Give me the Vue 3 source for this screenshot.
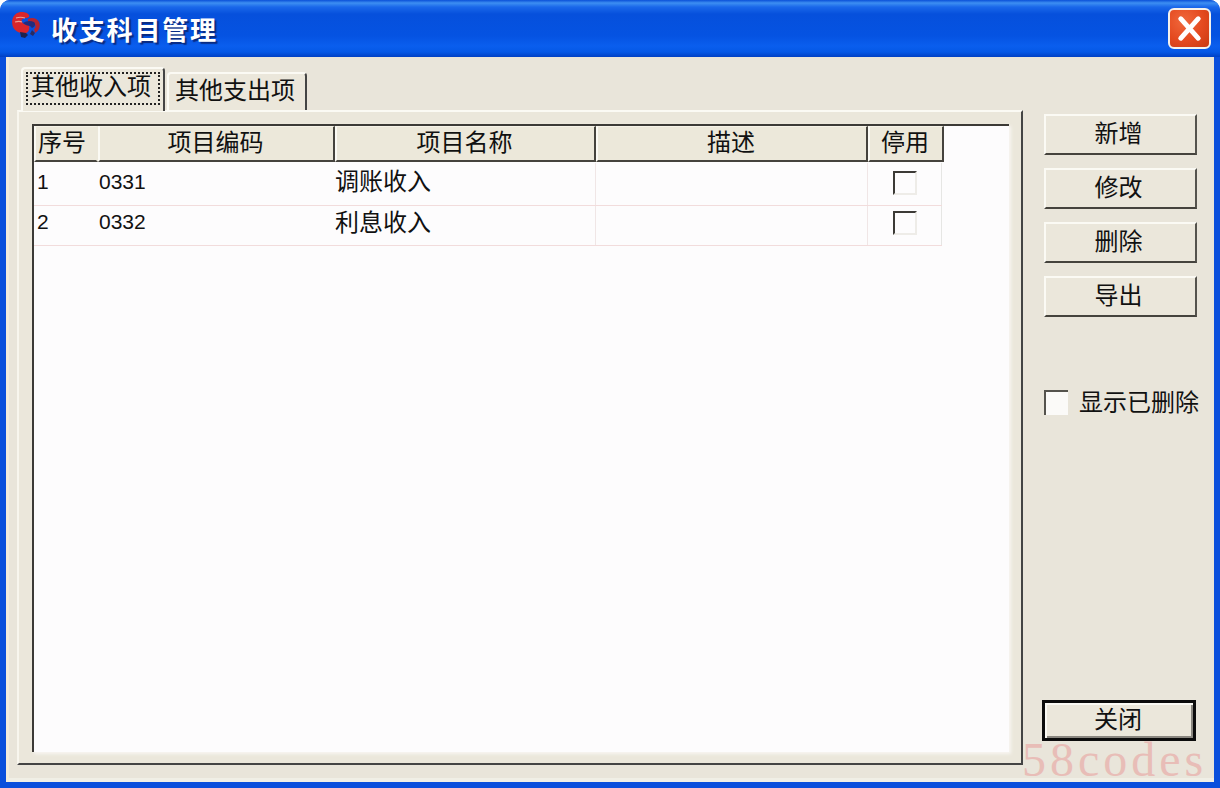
<script setup>
const tabs = [
  { label: '其他收入项', active: true },
  { label: '其他支出项', active: false },
]
const columns = [
  { label: '序号', width: 64 },
  { label: '项目编码', width: 237 },
  { label: '项目名称', width: 261 },
  { label: '描述', width: 272 },
  { label: '停用', width: 76 },
]
const rows = [
  { no: '1', code: '0331', name: '调账收入', desc: '' },
  { no: '2', code: '0332', name: '利息收入', desc: '' },
]
const actions = ['新增', '修改', '删除', '导出']
</script>

<template>
  <div class="window">
    <header class="titlebar">
      <svg class="logo" viewBox="0 0 30 26" width="30" height="26" aria-hidden="true">
        <path d="M9 0c4-.5 8 1 9 3 1 2-1 3-4 3-3 .5-4 2-3 4 1 2 4 3 7 3 1 3 0 7-3 8-6 1-11-2-13-6C0 10 1 2 9 0z" fill="#d9262b" />
        <path d="M5 6c3-1 6-1 9 0M4 10c3-1 5-1 7 0" stroke="#f0a090" stroke-width="1.200" fill="none" />
        <path d="M17 7c4-2 9-1 11 3 2 4 0 9-4 11l-1-4c2-1 2-4 0-6-2-1-4-1-6 0z" fill="#b52430" />
        <path d="M12 11c3-2 7-3 11-1 2 2 1 5-2 6l-2-2c-2 0-5-1-7-3z" fill="#232c7c" />
        <path d="M9 20l6 1 2 2-3 3-4-1z" fill="#1c2350" />
        <path d="M21 18l3 3-2 3-3-2z" fill="#2a2a60" />
      </svg>
      <h1 class="title">收支科目管理</h1>
      <button class="close-x" type="button" aria-label="关闭">
        <svg viewBox="0 0 44 42" width="43" height="41" aria-hidden="true">
          <path d="M13 11 L31 31 M31 11 L13 31" stroke="#fff" stroke-width="5" stroke-linecap="round" />
        </svg>
      </button>
    </header>

    <main class="client">
      <section class="left">
        <nav class="tabs">
          <div v-for="t in tabs" :key="t.label" class="tab" :class="{ active: t.active }">
            <span class="tab-label">{{ t.label }}</span>
          </div>
        </nav>
        <div class="panel">
          <div class="grid">
            <div class="grid-head">
              <div
                v-for="(c, i) in columns"
                :key="c.label"
                class="hcell"
                :class="{ first: i === 0 }"
                :style="{ width: c.width + 'px' }"
              >{{ c.label }}</div>
            </div>
            <div v-for="(r, ri) in rows" :key="r.no" class="row" :class="'row' + ri">
              <div class="cell latin" :style="{ width: columns[0].width + 'px' }">{{ r.no }}</div>
              <div class="cell latin" :style="{ width: columns[1].width + 'px' }">{{ r.code }}</div>
              <div class="cell cjk" :style="{ width: columns[2].width + 'px' }">{{ r.name }}</div>
              <div class="cell" :style="{ width: columns[3].width + 'px' }">{{ r.desc }}</div>
              <div class="cell check-cell"><span class="check"></span></div>
            </div>
          </div>
        </div>
      </section>

      <aside class="side">
        <button v-for="a in actions" :key="a" class="btn" type="button">{{ a }}</button>
        <label class="show-del">
          <span class="check-big"></span>
          <span class="show-text">显示已删除</span>
        </label>
        <button class="btn-default" type="button"><span>关闭</span></button>
      </aside>
    </main>

    <div class="watermark">58codes</div>
  </div>
</template>

<style>
html, body { margin: 0; background: #fff; }
</style>

<style scoped>
.window {
  position: relative;
  width: 1220px;
  height: 788px;
  box-sizing: border-box;
  display: flex;
  flex-direction: column;
  background: #0a4fdc;
  border-radius: 10px 10px 0 0;
  overflow: hidden;
  font-family: "Noto Sans CJK SC", "Liberation Sans", sans-serif;
  color: #111;
  font-size: 24px;
}
.titlebar {
  height: 57px;
  flex: none;
  box-sizing: border-box;
  display: flex;
  align-items: center;
  padding: 0 9px 0 11px;
  background: linear-gradient(180deg, #0a50d8 0, #3d8ff2 3px, #1a68ea 7px, #0650dc 14px, #0553e2 36px, #0a5eee 46px, #0558e6 52px, #0040c4 57px);
}
.logo { margin-top: -8px; flex: none; }
.title {
  margin: 0 0 0 10px;
  font-size: 26px;
  font-weight: 700;
  letter-spacing: 1.8px;
  line-height: 1;
  color: #fff;
  text-shadow: 2px 2px 1px #0a2a80;
}
.close-x {
  margin-left: auto;
  width: 43px;
  height: 41px;
  padding: 0;
  box-sizing: border-box;
  border: 2px solid #f4f1ec;
  border-radius: 6px;
  background: radial-gradient(circle at 35% 30%, #f0683c 0, #e4491f 55%, #c93a12 100%);
  display: flex;
  align-items: center;
  justify-content: center;
  overflow: hidden;
}
.close-x svg { flex: none; }
.client {
  flex: 1;
  margin: 0 6px 6px;
  padding: 10px 17px 17px 11px;
  box-sizing: border-box;
  display: flex;
  background: #e9e5da;
  box-shadow: inset 3px 0 0 #f3ecdc, inset 0 -4px 0 #f0efe6;
  min-height: 0;
}
.left {
  width: 1006px;
  flex: none;
  display: flex;
  flex-direction: column;
}
.tabs {
  height: 43px;
  flex: none;
  display: flex;
  align-items: flex-end;
  padding-left: 4px;
  gap: 2px;
  position: relative;
  z-index: 1;
}
.tab {
  box-sizing: border-box;
  width: 140px;
  height: 38px;
  display: flex;
  align-items: center;
  justify-content: center;
  background: #ebe7db;
  border-top: 2px solid #fbfaf4;
  border-left: 2px solid #fbfaf4;
  border-right: 2px solid #444;
  border-radius: 4px 4px 0 0;
  padding-right: 4px;
  font-size: 24px;
  line-height: 1;
}
.tab.active {
  width: 144px;
  height: 44px;
  margin-bottom: -1px;
  padding: 0 0 3px;
}
.tab-label {
  display: block;
  line-height: 28px;
  padding-bottom: 6px;
  box-sizing: content-box;
}
.tab.active .tab-label {
  width: 134px;
  box-sizing: border-box;
  text-align: center;
  line-height: 26px;
  padding: 0 4px 7px 0;
  outline: 2px dotted #222;
  outline-offset: -2px;
}
.panel {
  flex: 1;
  min-height: 0;
  box-sizing: border-box;
  padding: 12px 12px 11px 13px;
  background: #ebe7db;
  border-top: 2px solid #fbfaf4;
  border-left: 2px solid #f8f6ee;
  border-right: 2px solid #444;
  border-bottom: 2px solid #444;
}
.grid {
  height: 100%;
  box-sizing: border-box;
  background: #fdfcfd;
  border-top: 2px solid #3c3a36;
  border-left: 2px solid #3c3a36;
  box-shadow: 2px 2px 3px #f8f6f2;
}
.grid-head {
  display: flex;
  height: 36px;
  box-sizing: border-box;
}
.hcell {
  flex: none;
  box-sizing: border-box;
  display: flex;
  align-items: center;
  justify-content: center;
  height: 36px;
  padding-bottom: 6px;
  padding-right: 2px;
  background: #ece8da;
  border-left: 2px solid #fbfaf4;
  border-top: 1px solid #f6f3e8;
  border-bottom: 2px solid #45433d;
  border-right: 2px solid #45433d;
  font-size: 24px;
  line-height: 1;
}
.hcell.first {
  justify-content: flex-start;
  padding-left: 2px;
  padding-right: 0;
  border-right-color: #ece8da;
}
.row {
  display: flex;
  width: 908px;
  box-sizing: border-box;
  border-bottom: 1px solid #f2dcdc;
  line-height: 1;
}
.row0 { height: 44px; padding-top: 1px; }
.row1 { height: 40px; }
.cell {
  flex: none;
  box-sizing: border-box;
  display: flex;
  align-items: center;
  padding-left: 0;
  border-right: 1px solid #f0e6e6;
  font-size: 24px;
  height: 100%;
}
.row0 .cell { padding-bottom: 6px; }
.row1 .cell { padding-bottom: 8px; }
.row0 .cjk { padding-bottom: 8px; }
.row1 .cjk { padding-bottom: 9px; }
.latin {
  font-family: "Liberation Sans", sans-serif;
  font-size: 21px;
  border-right-color: transparent;
}
.row .latin:first-child { padding-left: 3px; }
.row .latin:nth-child(2) { padding-left: 1px; }
.row .check-cell {
  flex: 1;
  padding-left: 25px;
  padding-bottom: 2px;
  border-right: 1px solid #e6e6e4;
}
.row1 .check-cell { padding-bottom: 6px; }
.check {
  display: block;
  width: 24px;
  height: 24px;
  box-sizing: border-box;
  border-top: 2px solid #3c3a36;
  border-left: 2px solid #3c3a36;
  border-right: 2px solid #eeece8;
  border-bottom: 2px solid #eeece8;
}
.side {
  flex: 1;
  padding-left: 21px;
  padding-top: 47px;
  display: flex;
  flex-direction: column;
  align-items: flex-start;
}
.btn {
  width: 153px;
  height: 41px;
  margin-bottom: 13px;
  padding: 0 4px 6px 0;
  box-sizing: border-box;
  background: #ebe7db;
  border-style: solid;
  border-width: 2px;
  border-color: #fbfaf4 #55534d #45433d #fbfaf4;
  font: 24px/1 "Noto Sans CJK SC", sans-serif;
  color: #111;
  flex: none;
}
.show-del {
  margin-top: 60px;
  display: flex;
  align-items: center;
  gap: 11px;
  white-space: nowrap;
  line-height: 1;
}
.show-text { position: relative; top: -2px; }
.check-big {
  display: block;
  width: 24px;
  height: 25px;
  box-sizing: border-box;
  background: #fbfaf8;
  border-top: 2px solid #55534d;
  border-left: 2px solid #55534d;
  flex: none;
}
.btn-default {
  margin-top: auto;
  margin-left: -2px;
  margin-bottom: 24px;
  width: 154px;
  height: 41px;
  padding: 0 2px 6px 0;
  box-sizing: border-box;
  background: #ebe7db;
  border: 3px solid #0c0c0c;
  box-shadow: inset 2px 2px 0 #fbfaf4, inset -2px -2px 0 #8a8780;
  font: 24px/1 "Noto Sans CJK SC", sans-serif;
  color: #111;
  flex: none;
}
.watermark {
  position: absolute;
  left: 1022px;
  top: 733px;
  font-family: "Liberation Serif", serif;
  font-size: 48px;
  line-height: 54px;
  letter-spacing: 4px;
  color: #e8b0ac;
  opacity: 0.75;
  pointer-events: none;
}
</style>
